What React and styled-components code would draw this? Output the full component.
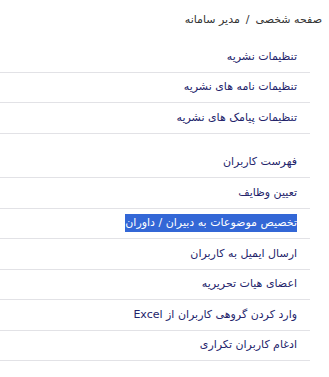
import React from 'react'
import styled, { createGlobalStyle } from 'styled-components'

const GlobalStyle = createGlobalStyle`
  html, body {
    margin: 0;
    padding: 0;
    background: #fff;
  }
  body {
    font-family: "DejaVu Sans", "Noto Sans", sans-serif;
    font-size: 11px;
  }
  *, *::before, *::after {
    box-sizing: border-box;
  }
`

const Page = styled.div`
  width: 329px;
  height: 377px;
  direction: rtl;
  overflow: hidden;
`

const Breadcrumb = styled.div`
  display: flex;
  gap: 6px;
  padding: 10px 7px 0 0;
  height: 30px;
  line-height: 20px;
  color: #333;
`

const Section = styled.ul`
  list-style: none;
  margin: ${({ top }) => top}px 19px 0 0;
  padding: 0;
  width: 310px;
`

const Item = styled.li`
  height: 30.5px;
  display: flex;
  align-items: center;
  padding-right: 13px;
  border-bottom: 1px solid #e2e2e6;
  color: #24246b;
`

const Label = styled.span`
  line-height: 18px;
  background: ${({ selected }) => (selected ? '#3367d6' : 'transparent')};
  color: ${({ selected }) => (selected ? '#fff' : 'inherit')};
`

const groups = [
  {
    top: 12,
    items: ['تنظیمات نشریه', 'تنظیمات نامه های نشریه', 'تنظیمات پیامک های نشریه'],
  },
  {
    top: 14,
    items: [
      'فهرست کاربران',
      'تعیین وظایف',
      'تخصیص موضوعات به دبیران / داوران',
      'ارسال ایمیل به کاربران',
      'اعضای هیات تحریریه',
      'وارد کردن گروهی کاربران از Excel',
      'ادغام کاربران تکراری',
    ],
  },
]

export default function App() {
  return (
    <Page>
      <GlobalStyle />
      <Breadcrumb>
        <span>صفحه شخصی</span>
        <span>/</span>
        <span>مدیر سامانه</span>
      </Breadcrumb>
      {groups.map((g, i) => (
        <Section key={i} top={g.top}>
          {g.items.map((t) => (
            <Item key={t}>
              <Label selected={t.startsWith('تخصیص')}>{t}</Label>
            </Item>
          ))}
        </Section>
      ))}
    </Page>
  )
}
